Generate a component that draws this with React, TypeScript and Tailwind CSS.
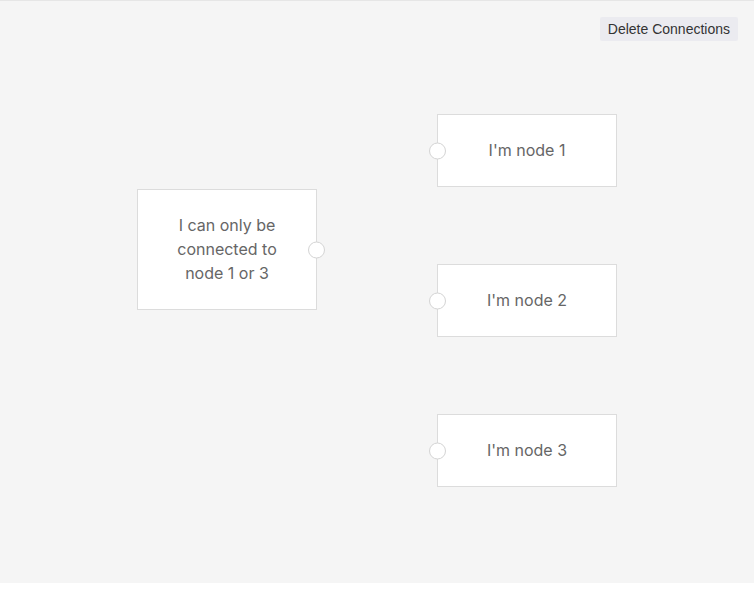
const nodes = [
  { id: "1", label: "I'm node 1", x: 437, y: 114 },
  { id: "2", label: "I'm node 2", x: 437, y: 264 },
  { id: "3", label: "I'm node 3", x: 437, y: 414 },
];

function Handle({ side }: { side: "left" | "right" }) {
  return (
    <div
      className={
        "absolute top-1/2 -translate-y-1/2 w-[17px] h-[17px] rounded-full bg-white border border-[#d4d4d4] " +
        (side === "left" ? "-left-[9px]" : "-right-[9px]")
      }
    />
  );
}

export default function App() {
  return (
    <div
      className="w-[754px] h-[600px] bg-white"
      style={{ fontFamily: "Inter, 'Liberation Sans', sans-serif" }}
    >
      <div className="relative w-full h-[583px] bg-[#f5f5f5] border-t border-[#e6e6e6]">
        <button className="absolute top-[16px] right-4 h-6 px-2 bg-[#ebebf0] rounded-[2px] text-sm text-[#333] leading-6 font-['Liberation_Sans',Arial,sans-serif]">
          Delete Connections
        </button>

        <div className="absolute left-[137px] top-[188px] w-[180px] h-[121px] bg-white border border-[#dcdcdc] flex items-center justify-center text-center text-base leading-6 text-[#666]">
          <span className="w-[110px] -mt-[2px]">I can only be connected to node 1 or 3</span>
          <Handle side="right" />
        </div>

        {nodes.map((n) => (
          <div
            key={n.id}
            className="absolute w-[180px] h-[73px] bg-white border border-[#dcdcdc] flex items-center justify-center text-base text-[#666]"
            style={{ left: n.x, top: n.y - 1 }}
          >
            <span className="-mt-[2px]">{n.label}</span>
            <Handle side="left" />
          </div>
        ))}
      </div>
    </div>
  );
}
